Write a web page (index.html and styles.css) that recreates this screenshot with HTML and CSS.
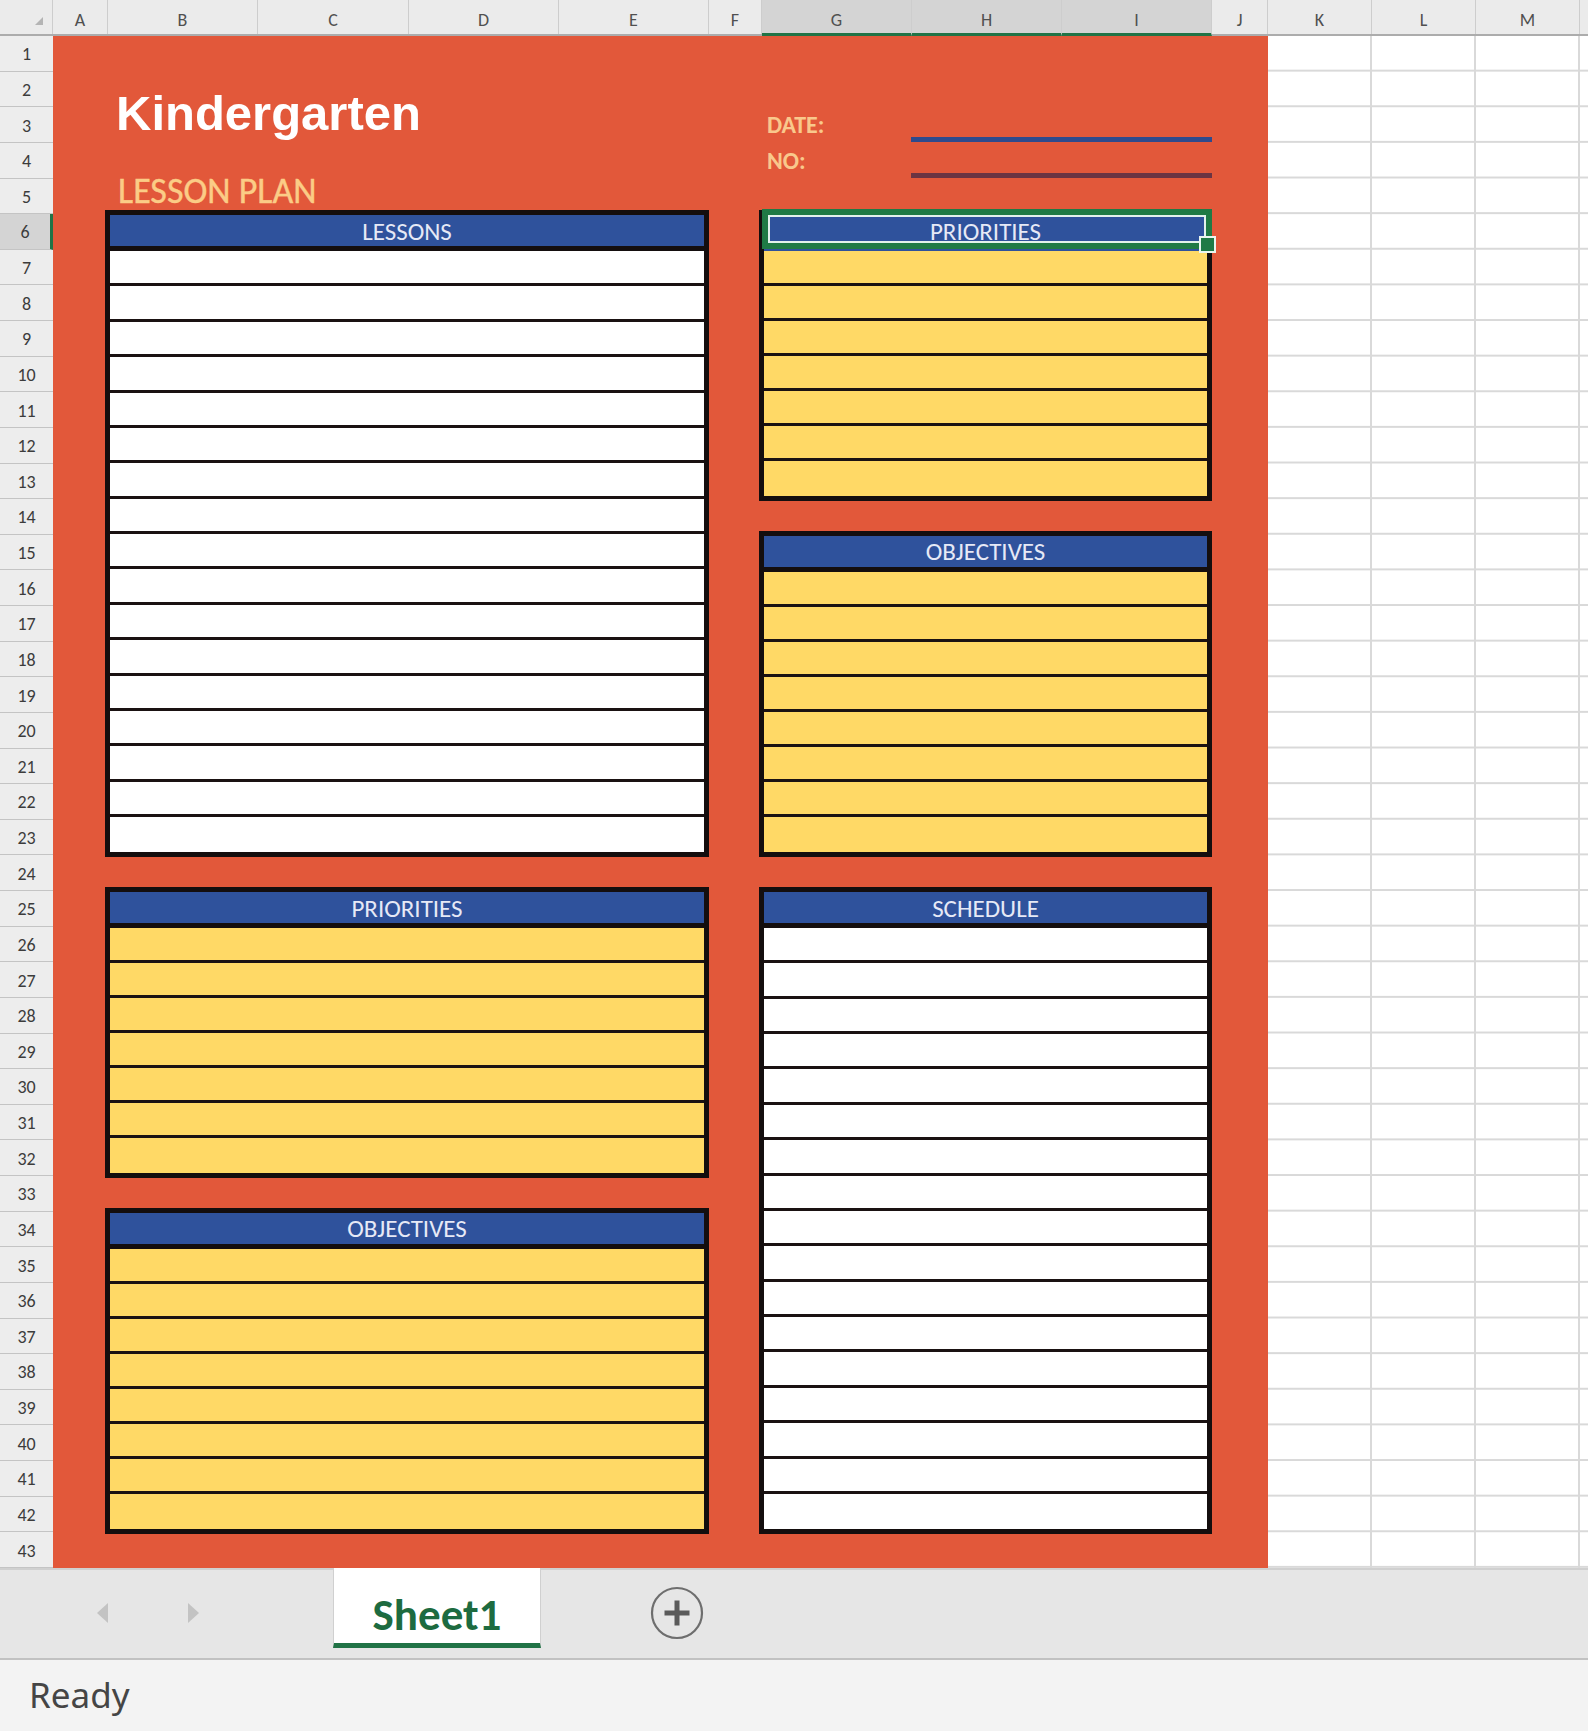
FILE: index.html
```html
<!DOCTYPE html>
<html lang="en">
<head>
<meta charset="utf-8">
<title>Kindergarten Lesson Plan</title>
<link rel="stylesheet" href="styles.css">
</head>
<body>
<div class="app">
  <div class="colhead">
    <div class="corner"><span class="tri"></span></div>
    <div class="ch">A</div>
    <div class="ch">B</div>
    <div class="ch">C</div>
    <div class="ch">D</div>
    <div class="ch">E</div>
    <div class="ch">F</div>
    <div class="ch sel">G</div>
    <div class="ch sel">H</div>
    <div class="ch sel">I</div>
    <div class="ch">J</div>
    <div class="ch">K</div>
    <div class="ch">L</div>
    <div class="ch">M</div>
    <div class="ch last"></div>
  </div>
  <div class="main">
    <div class="rowhead">
      <div class="rh">1</div><div class="rh">2</div><div class="rh">3</div><div class="rh">4</div><div class="rh">5</div>
      <div class="rh sel">6</div><div class="rh">7</div><div class="rh">8</div><div class="rh">9</div><div class="rh">10</div>
      <div class="rh">11</div><div class="rh">12</div><div class="rh">13</div><div class="rh">14</div><div class="rh">15</div>
      <div class="rh">16</div><div class="rh">17</div><div class="rh">18</div><div class="rh">19</div><div class="rh">20</div>
      <div class="rh">21</div><div class="rh">22</div><div class="rh">23</div><div class="rh">24</div><div class="rh">25</div>
      <div class="rh">26</div><div class="rh">27</div><div class="rh">28</div><div class="rh">29</div><div class="rh">30</div>
      <div class="rh">31</div><div class="rh">32</div><div class="rh">33</div><div class="rh">34</div><div class="rh">35</div>
      <div class="rh">36</div><div class="rh">37</div><div class="rh">38</div><div class="rh">39</div><div class="rh">40</div>
      <div class="rh">41</div><div class="rh">42</div><div class="rh">43</div>
    </div>
    <div class="page">
      <div class="title">Kindergarten</div>
      <div class="subtitle">LESSON PLAN</div>
      <div class="lbl date">DATE:</div>
      <div class="lbl no">NO:</div>
      <div class="uline blue"></div>
      <div class="uline maroon"></div>

      <div class="box white lessons">
        <div class="bh">LESSONS</div>
        <div class="r"></div><div class="r"></div><div class="r"></div><div class="r"></div><div class="r"></div>
        <div class="r"></div><div class="r"></div><div class="r"></div><div class="r"></div><div class="r"></div>
        <div class="r"></div><div class="r"></div><div class="r"></div><div class="r"></div><div class="r"></div>
        <div class="r"></div><div class="r"></div>
      </div>

      <div class="box yellow pri-r">
        <div class="bh selected">PRIORITIES<div class="selbox"><span class="handle"></span></div></div>
        <div class="r"></div><div class="r"></div><div class="r"></div><div class="r"></div><div class="r"></div>
        <div class="r"></div><div class="r"></div>
      </div>

      <div class="box yellow obj-r">
        <div class="bh">OBJECTIVES</div>
        <div class="r"></div><div class="r"></div><div class="r"></div><div class="r"></div><div class="r"></div>
        <div class="r"></div><div class="r"></div><div class="r"></div>
      </div>

      <div class="box yellow pri-l">
        <div class="bh">PRIORITIES</div>
        <div class="r"></div><div class="r"></div><div class="r"></div><div class="r"></div><div class="r"></div>
        <div class="r"></div><div class="r"></div>
      </div>

      <div class="box yellow obj-l">
        <div class="bh">OBJECTIVES</div>
        <div class="r"></div><div class="r"></div><div class="r"></div><div class="r"></div><div class="r"></div>
        <div class="r"></div><div class="r"></div><div class="r"></div>
      </div>

      <div class="box white sched">
        <div class="bh">SCHEDULE</div>
        <div class="r"></div><div class="r"></div><div class="r"></div><div class="r"></div><div class="r"></div>
        <div class="r"></div><div class="r"></div><div class="r"></div><div class="r"></div><div class="r"></div>
        <div class="r"></div><div class="r"></div><div class="r"></div><div class="r"></div><div class="r"></div>
        <div class="r"></div><div class="r"></div>
      </div>
    </div>
    <div class="blank"></div>
  </div>
  <div class="tabbar">
    <span class="arrow left"></span>
    <span class="arrow right"></span>
    <div class="tab">Sheet1</div>
    <svg class="plus" width="56" height="56" viewBox="0 0 56 56" aria-label="New sheet">
      <circle cx="28" cy="28" r="25" fill="none" stroke="#6e6e6e" stroke-width="2.2"/>
      <path d="M28 15.5 V40.5 M15.5 28 H40.5" stroke="#5a5a5a" stroke-width="5" fill="none"/>
    </svg>
  </div>
  <div class="status">Ready</div>
</div>
</body>
</html>
```
FILE: styles.css
```css
* { box-sizing: border-box; margin: 0; padding: 0; }
html, body { width: 1588px; height: 1731px; overflow: hidden; background: #ffffff; }
body { font-family: Carlito, Calibri, "Liberation Sans Narrow", "Open Sans", sans-serif; }

.app { display: flex; flex-direction: column; width: 1588px; height: 1731px; }

/* column header */
.colhead {
  display: grid;
  grid-template-columns: 53px 55px 150px 151px 150px 150px 53px 150px 150px 150px 56px 104px 104px 104px 1fr;
  height: 36px;
  flex: none;
  background: #ebebeb;
  border-bottom: 2px solid #acacac;
}
.corner { display: flex; align-items: flex-end; justify-content: flex-end; padding: 0 9px 9px 0; border-right: 1px solid #cdcdcd; }
.tri { width: 0; height: 0; border-left: 8px solid transparent; border-bottom: 8px solid #b4b4b4; }
.ch {
  display: flex; align-items: center; justify-content: center;
  padding-top: 6px;
  font-size: 18px; color: #505050;
  border-right: 1px solid #cdcdcd;
}
.ch.sel { background: #d4d4d4; border-bottom: 3px solid #217346; margin-bottom: -2px; padding-top: 7px; }
.ch.last { border-right: 0; }

/* body */
.main { display: flex; height: 1532px; flex: none; }
.rowhead { width: 53px; flex: none; display: flex; flex-direction: column; background: #ededed; }
.rh {
  height: 35.63px; flex: none;
  display: flex; align-items: center; justify-content: center;
  padding-top: 2px;
  font-size: 18px; color: #3c3c3c;
  border-bottom: 1px solid #c4c4c4;
}
.rh.sel { background: #d4d4d4; border-right: 3px solid #217346; }

.page {
  width: 1215px; flex: none;
  background: #e2583a;
  display: grid;
  grid-template-columns: 55px 150px 151px 150px 150px 53px 150px 150px 150px 56px;
  grid-template-rows: repeat(43, 35.63px);
}
.blank {
  flex: 1;
  background-color: #ffffff;
  background-image:
    linear-gradient(to right, transparent 102px, #d9d9d9 102px),
    linear-gradient(to bottom, transparent 33.63px, #d9d9d9 33.63px);
  background-size: 104px 100%, 100% 35.63px;
}

/* heading texts */
.title {
  grid-column: 2 / 6; grid-row: 2 / 4; align-self: end;
  margin-bottom: 5px; padding-left: 8px;
  font-family: "Liberation Sans", Arial, sans-serif;
  font-weight: bold; font-size: 49px; line-height: 49px; color: #ffffff;
  white-space: nowrap;
}
.subtitle {
  grid-column: 2 / 6; grid-row: 5; align-self: end;
  margin-bottom: 5px; padding-left: 10px;
  font-size: 36px; line-height: 36px; color: #fbcc86;
  font-weight: normal;
  -webkit-text-stroke: 0.4px #fbcc86;
  white-space: nowrap;
}
.lbl {
  grid-column: 7 / 8; align-self: end;
  margin-bottom: 6px; padding-left: 5px;
  font-weight: bold; font-size: 24px; line-height: 24px; color: #f9c88c;
  white-space: nowrap;
}
.date { grid-row: 3; }
.no { grid-row: 4; }
.uline { grid-column: 8 / 10; align-self: end; height: 5px; margin: 0 0 1px -1px; }
.uline.blue { grid-row: 3; background: #2f4a8c; }
.uline.maroon { grid-row: 4; background: #6b3442; }

/* boxes */
.box {
  display: grid;
  grid-template-rows: 36px;
  grid-auto-rows: 1fr;
  border: 5px solid #140e0e;
  margin: -4px 0 -2px -3px;
}
.bh {
  position: relative;
  background: #2f529c;
  border-bottom: 5px solid #140e0e;
  color: #e6e9f6;
  font-size: 25px;
  display: flex; align-items: center; justify-content: center;
  padding-top: 1px;
}
.bh.selected { border-bottom-color: #2f529c; }
.r { border-bottom: 3px solid #1a1212; }
.r:last-child { border-bottom: 0; }
.white .r { background: #ffffff; }
.yellow .r { background: #ffd966; }

.lessons { grid-column: 2 / 6; grid-row: 6 / 24; }
.pri-r { grid-column: 7 / 10; grid-row: 6 / 14; }
.obj-r { grid-column: 7 / 10; grid-row: 15 / 24; }
.pri-l { grid-column: 2 / 6; grid-row: 25 / 33; }
.obj-l { grid-column: 2 / 6; grid-row: 34 / 43; }
.sched { grid-column: 7 / 10; grid-row: 25 / 43; }

.selbox {
  position: absolute; top: -6px; left: -2px; right: -5px; bottom: -3px;
  border: 6px solid #1f7a45;
  box-shadow: inset 0 0 0 2px #e2f1ec;
}
.handle {
  position: absolute; right: -10px; bottom: -10px;
  width: 17px; height: 17px;
  background: #1f7a45; border: 2px solid #e9f5ef;
}

/* sheet tabs */
.tabbar {
  height: 92px; flex: none;
  background: #e6e6e6;
  border-top: 2px solid #d0d0d0;
  border-bottom: 2px solid #c2c2c2;
  display: flex; align-items: flex-start;
}
.arrow { width: 0; height: 0; border-top: 10px solid transparent; border-bottom: 10px solid transparent; margin-top: 33px; }
.arrow.left { margin-left: 97px; border-right: 11px solid #c3c3c3; }
.arrow.right { margin-left: 80px; border-left: 11px solid #c3c3c3; }
.tab {
  margin-left: 134px; margin-top: -2px;
  width: 208px; height: 80px;
  background: #ffffff;
  border-left: 1px solid #d0d0d0; border-right: 1px solid #d0d0d0;
  border-bottom: 5px solid #217346;
  display: flex; justify-content: center;
  padding-top: 24px;
  font-weight: bold; font-size: 45px; line-height: 45px; color: #1d6b40;
}
.plus { margin-left: 108px; margin-top: 15px; }

/* status bar */
.status {
  flex: 1;
  background: #f3f3f3;
  padding: 17px 0 0 29px;
  font-family: "Noto Sans", "Open Sans", sans-serif;
  font-size: 35px; line-height: 35px; color: #454545;
}
```
